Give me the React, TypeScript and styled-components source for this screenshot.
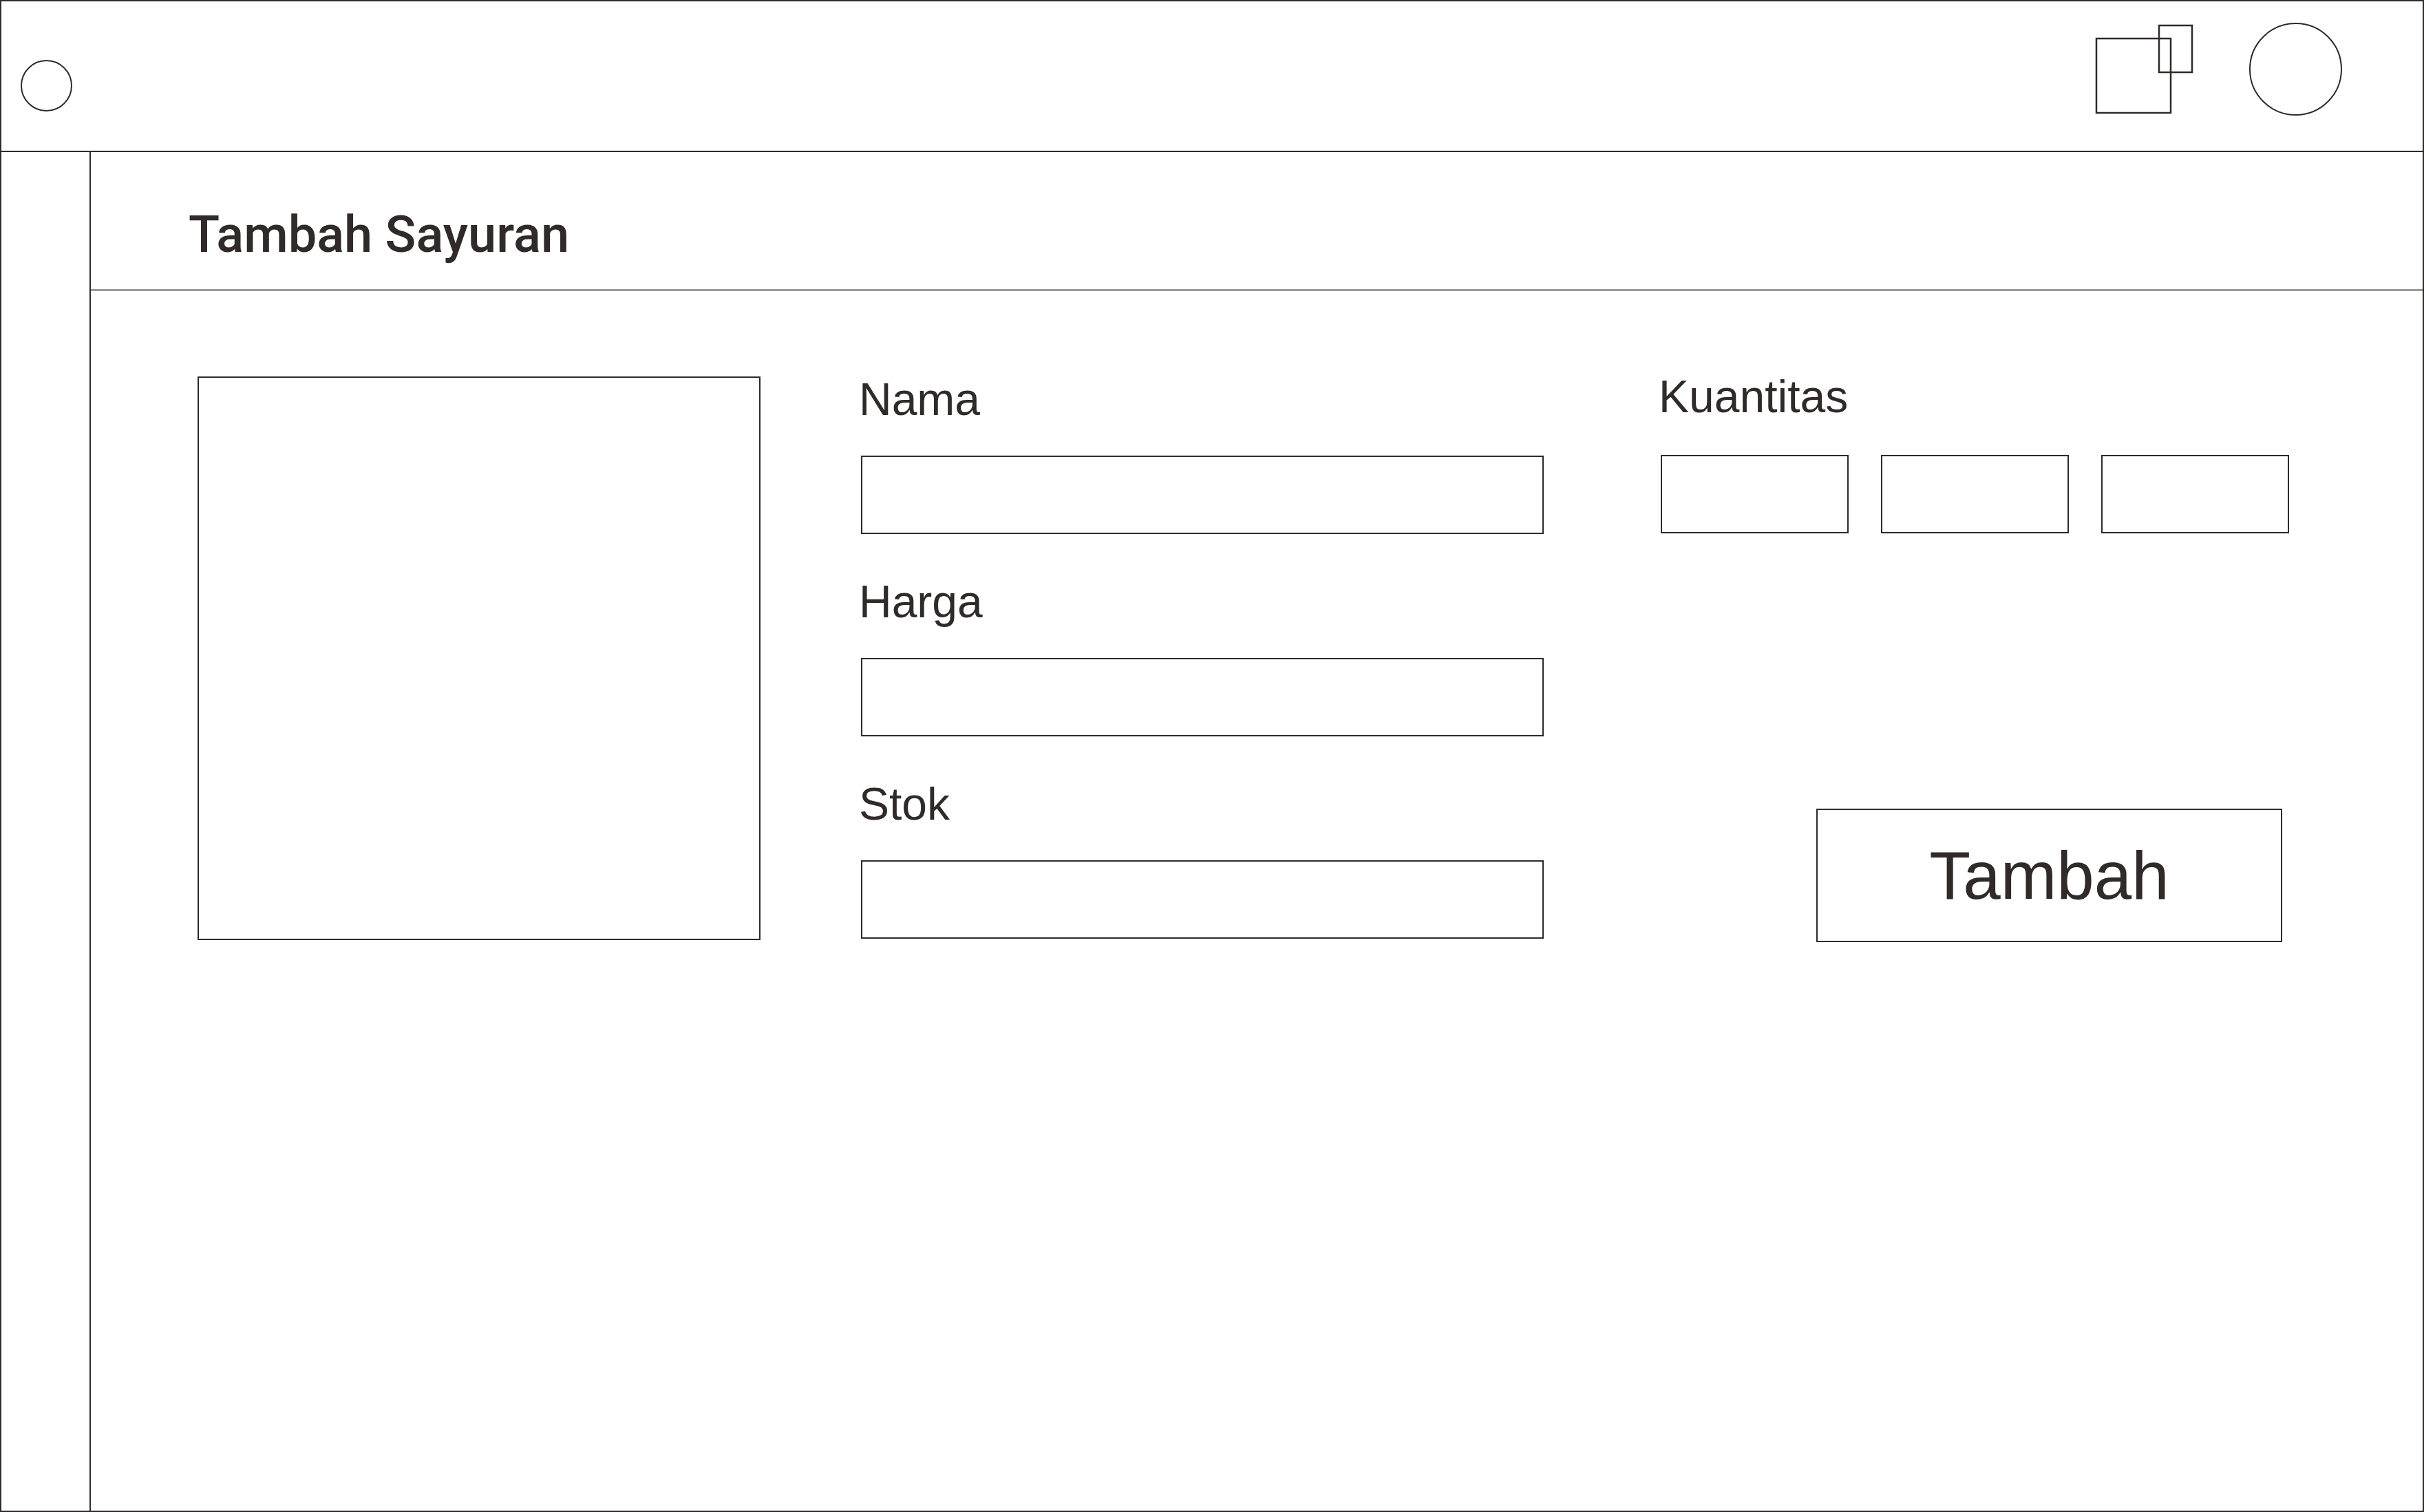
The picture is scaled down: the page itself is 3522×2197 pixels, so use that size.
import React from "react";
import styled, { createGlobalStyle } from "styled-components";

const INK = "#302a28";

const Global = createGlobalStyle`
  html, body { margin: 0; padding: 0; background: #ffffff; }
  body { font-family: "Liberation Sans", Arial, sans-serif; color: ${INK}; }
  * { box-sizing: border-box; }
`;

const Frame = styled.div`
  width: 3522px;
  height: 2197px;
  border: 2px solid ${INK};
  display: flex;
  flex-direction: column;
  background: #fff;
`;

const Header = styled.header`
  height: 219px;
  flex: none;
  border-bottom: 2px solid ${INK};
  display: flex;
  justify-content: space-between;
  align-items: flex-start;
  padding-right: 117px;
`;

const Circle = styled.div<{ $size: number; $top: number; $left?: number }>`
  width: ${(p) => p.$size}px;
  height: ${(p) => p.$size}px;
  border: 2.5px solid ${INK};
  border-radius: 50%;
  margin-top: ${(p) => p.$top}px;
  margin-left: ${(p) => p.$left ?? 0}px;
  flex: none;
`;

const HeaderTools = styled.div`
  display: flex;
  align-items: flex-start;
  gap: 81px;
`;

const WindowIcon = styled.svg`
  margin-top: 33px;
  flex: none;
`;

const Body = styled.div`
  flex: 1;
  display: flex;
  min-height: 0;
`;

const Sidebar = styled.aside`
  width: 130px;
  flex: none;
  border-right: 2px solid ${INK};
`;

const Main = styled.main`
  flex: 1;
  display: flex;
  flex-direction: column;
`;

const TitleBar = styled.div`
  padding: 83px 0 42px 142px;
  border-bottom: 3px solid #9b9b9b;
`;

const Title = styled.h1`
  margin: 0;
  font-family: Roboto, "Liberation Sans", sans-serif;
  font-weight: 500;
  font-size: 74px;
  line-height: 1;
  color: ${INK};
`;

const FormArea = styled.section`
  display: flex;
  align-items: flex-start;
  padding: 124px 0 0 155px;
`;

const ImageBox = styled.div`
  width: 818px;
  height: 819px;
  border: 2px solid ${INK};
  flex: none;
`;

const Fields = styled.div`
  width: 992px;
  margin-left: 146px;
  display: flex;
  flex-direction: column;
  gap: 65px;
  flex: none;
`;

const Field = styled.div`
  display: flex;
  flex-direction: column;
`;

const Label = styled.label`
  font-family: "Liberation Sans", Arial, sans-serif;
  font-size: 66px;
  line-height: 1;
  color: ${INK};
  margin-bottom: 49px;
  margin-left: -3px;
`;

const TextInput = styled.input<{ $width?: number }>`
  width: ${(p) => (p.$width ? `${p.$width}px` : "100%")};
  height: 114px;
  border: 2px solid ${INK};
  border-radius: 0;
  background: #fff;
  padding: 0 16px;
  font-family: "Liberation Sans", Arial, sans-serif;
  font-size: 48px;
  outline: none;
  flex: none;
`;

const QtyColumn = styled.div`
  width: 913px;
  margin-left: 170px;
  margin-top: -4px;
  display: flex;
  flex-direction: column;
  flex: none;
`;

const QtyRow = styled.div`
  display: flex;
  gap: 47px;
  margin-top: 3px;
`;

const SubmitButton = styled.button`
  align-self: flex-end;
  margin: 400px 10px 0 0;
  width: 677px;
  height: 194px;
  border: 2px solid ${INK};
  background: #fff;
  color: ${INK};
  font-family: "Liberation Sans", Arial, sans-serif;
  font-size: 98px;
  line-height: 1;
  cursor: pointer;
  padding: 0;
`;

export default function App() {
  return (
    <>
      <Global />
      <Frame>
        <Header>
          <Circle $size={75} $top={85} $left={28} />
          <HeaderTools>
            <WindowIcon width="143" height="131" viewBox="0 0 143 131" fill="none">
              <rect x="2" y="21" width="108" height="108" stroke={INK} strokeWidth="2.5" />
              <rect x="93" y="2" width="48" height="68" stroke={INK} strokeWidth="2.5" />
            </WindowIcon>
            <Circle $size={135} $top={31} />
          </HeaderTools>
        </Header>
        <Body>
          <Sidebar />
          <Main>
            <TitleBar>
              <Title>Tambah Sayuran</Title>
            </TitleBar>
            <FormArea>
              <ImageBox />
              <Fields>
                <Field>
                  <Label>Nama</Label>
                  <TextInput />
                </Field>
                <Field>
                  <Label>Harga</Label>
                  <TextInput />
                </Field>
                <Field>
                  <Label>Stok</Label>
                  <TextInput />
                </Field>
              </Fields>
              <QtyColumn>
                <Label>Kuantitas</Label>
                <QtyRow>
                  <TextInput $width={273} />
                  <TextInput $width={273} />
                  <TextInput $width={273} />
                </QtyRow>
                <SubmitButton>Tambah</SubmitButton>
              </QtyColumn>
            </FormArea>
          </Main>
        </Body>
      </Frame>
    </>
  );
}
